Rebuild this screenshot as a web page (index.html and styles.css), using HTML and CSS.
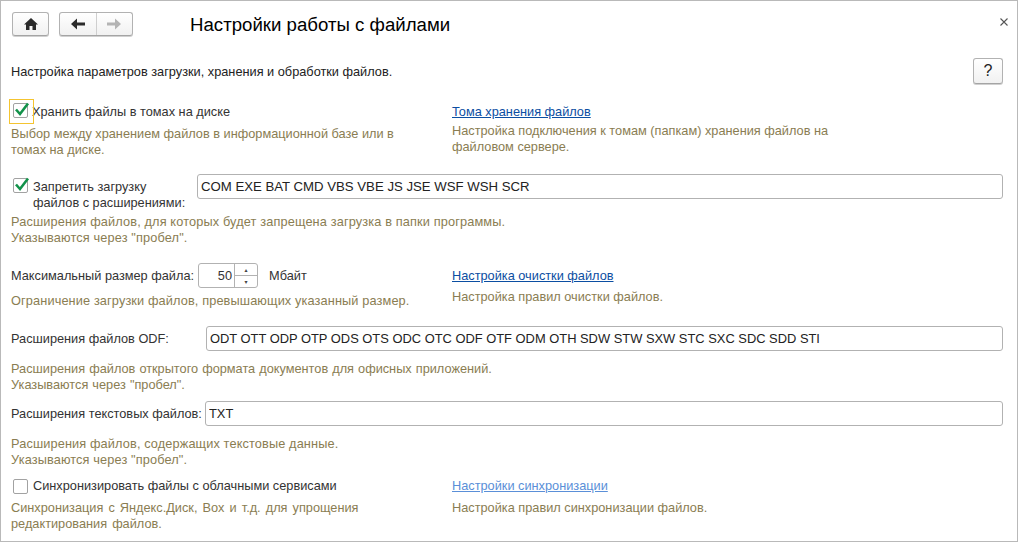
FILE: index.html
```html
<!DOCTYPE html>
<html lang="ru">
<head>
<meta charset="utf-8">
<title>Настройки работы с файлами</title>
<link rel="stylesheet" href="styles.css">
</head>
<body>
<div class="window">
  <header class="topbar">
    <button class="btn home" aria-label="Домой"><svg width="16" height="14" viewBox="0 0 16 14"><path d="M8 1 L1 7.5 L3 7.5 L3 13 L6.5 13 L6.5 9 L9.5 9 L9.5 13 L13 13 L13 7.5 L15 7.5 Z" fill="#2b2b2b"/></svg></button>
    <div class="btn nav">
      <span class="navpart"><svg width="16" height="12" viewBox="0 0 16 12"><path d="M7 0.5 L1 6 L7 11.5 L7 7.5 L15 7.5 L15 4.5 L7 4.5 Z" fill="#2b2b2b"/></svg></span>
      <span class="navpart last"><svg width="16" height="12" viewBox="0 0 16 12"><path d="M9 0.5 L15 6 L9 11.5 L9 7.5 L1 7.5 L1 4.5 L9 4.5 Z" fill="#b4b4b4"/></svg></span>
    </div>
    <h1 class="title">Настройки работы с файлами</h1>
    <svg class="close" width="8" height="8" viewBox="0 0 8 8" role="img" aria-label="Закрыть"><path d="M0.5 0.5 L7.5 7.5 M7.5 0.5 L0.5 7.5" stroke="#555" stroke-width="1.1" fill="none"/></svg>
  </header>

  <div class="intro">
    <span class="introtext">Настройка параметров загрузки, хранения и обработки файлов.</span>
    <button class="btn help">?</button>
  </div>

  <section class="cols first">
    <div class="col">
      <label class="check focused"><span class="box"><svg width="16" height="15" viewBox="0 0 16 15"><path d="M2 7.5 L6 12 L14 1.5" fill="none" stroke="#12924a" stroke-width="2.6"/></svg></span><span>Хранить файлы в томах на диске</span></label>
      <p class="desc d1">Выбор между хранением файлов в информационной базе или в томах на диске.</p>
    </div>
    <div class="col right">
      <a class="link">Тома хранения файлов</a>
      <p class="desc d1">Настройка подключения к томам (папкам) хранения файлов на файловом сервере.</p>
    </div>
  </section>

  <section class="ban">
    <label class="check wrap"><span class="box"><svg width="16" height="15" viewBox="0 0 16 15"><path d="M2 7.5 L6 12 L14 1.5" fill="none" stroke="#12924a" stroke-width="2.6"/></svg></span><span class="wraptext">Запретить загрузку<br>файлов с расширениями:</span></label>
    <input class="field" value="COM EXE BAT CMD VBS VBE JS JSE WSF WSH SCR">
  </section>
  <p class="desc b1">Расширения файлов, для которых будет запрещена загрузка в папки программы.<br>Указываются через "пробел".</p>

  <section class="cols size">
    <div class="col">
      <div class="sizerow">
        <span>Максимальный размер файла:</span>
        <div class="spin"><span class="val">50</span><span class="arrows"><i>▴</i><i>▾</i></span></div>
        <span class="unit">Мбайт</span>
      </div>
      <p class="desc d2">Ограничение загрузки файлов, превышающих указанный размер.</p>
    </div>
    <div class="col right">
      <a class="link">Настройка очистки файлов</a>
      <p class="desc d3">Настройка правил очистки файлов.</p>
    </div>
  </section>

  <section class="line odf">
    <span class="lab">Расширения файлов ODF:</span>
    <input class="field" value="ODT OTT ODP OTP ODS OTS ODC OTC ODF OTF ODM OTH SDW STW SXW STC SXC SDC SDD STI">
  </section>
  <p class="desc b2">Расширения файлов открытого формата документов для офисных приложений.<br>Указываются через "пробел".</p>

  <section class="line txt">
    <span class="lab">Расширения текстовых файлов:</span>
    <input class="field" value="TXT">
  </section>
  <p class="desc b2 b3">Расширения файлов, содержащих текстовые данные.<br>Указываются через "пробел".</p>

  <section class="cols sync">
    <div class="col">
      <label class="check"><span class="box"></span><span>Синхронизировать файлы с облачными сервисами</span></label>
      <p class="desc d4 d5">Синхронизация с Яндекс.Диск, Box и т.д. для упрощения редактирования файлов.</p>
    </div>
    <div class="col right">
      <a class="link soft">Настройки синхронизации</a>
      <p class="desc d4">Настройка правил синхронизации файлов.</p>
    </div>
  </section>
</div>
</body>
</html>
```
FILE: styles.css
```css
* { box-sizing: border-box; }
html, body { margin: 0; height: 100%; }
body { font: 12.75px/16px "Liberation Sans", Arial, sans-serif; color: #333; background: #fff; overflow: hidden; }
.window { width: 1018px; height: 542px; border: 1px solid #b9b9b9; padding: 0 14px 0 10px; overflow: hidden; }
p { margin: 0; }

.topbar { display: flex; align-items: flex-start; height: 25px; margin-top: 11px; position: relative; }
.btn { border: 1px solid #b2b2b2; border-bottom-color: #a4a4a4; border-radius: 3px; background: linear-gradient(#fff, #f1f1f1); padding: 0; box-shadow: 0 1px 0 #d0d0d0; }
.home { width: 37px; height: 24px; display: flex; align-items: center; justify-content: center; margin-left: 1px; }
.nav { width: 74px; height: 24px; display: flex; margin-left: 10px; }
.navpart { flex: 1; display: flex; align-items: center; justify-content: center; border-right: 1px solid #cfcfcf; }
.navpart.last { border-right: 0; }
.title { margin: 1px 0 0 57px; font-size: 18.65px; font-weight: 400; color: #000; line-height: 24px; }
.close { position: absolute; right: -5px; top: 6px; }

.intro { display: flex; justify-content: space-between; align-items: center; height: 26px; margin-top: 21px; color: #222; }
.introtext { padding-top: 2px; }
.help { width: 30px; height: 26px; font: 16px "Liberation Sans", Arial, sans-serif; color: #222; }

.cols { display: grid; grid-template-columns: 441px 400px; }
.first { margin-top: 20px; }
.check { display: flex; align-items: flex-start; gap: 5px; position: relative; padding-left: 2px; }
.box { width: 15px; height: 15px; border: 1px solid #a2a2a2; border-radius: 2px; background: #fff; flex: none; position: relative; }
.box svg { position: absolute; left: 0; top: -2px; }
.check.focused::before { content: ""; position: absolute; left: -2px; top: -5px; width: 23px; height: 23px; border: 1px solid #f4c430; }
.check.focused { height: 19px; gap: 4px; }
.check.focused .box { margin-top: -1px; }
.link { color: #0b4ea2; text-decoration: underline; display: block; }
.link.soft { color: #5a8fd8; }
.desc { color: #8a7d52; }
.d1 { margin-top: 3px; max-width: 390px; }
.col { min-width: 0; }

.ban { display: flex; align-items: flex-start; margin-top: 16px; }
.ban .check { width: 186px; padding-top: 4px; }
.wraptext { padding-top: 1px; }
.ban .field { width: 806px; font-size: 13.2px; }
.field { height: 25px; border: 1px solid #b2b2b2; border-radius: 3px; padding: 0 3px; font: 12.9px "Liberation Sans", Arial, sans-serif; color: #222; background: #fff; outline: 0; }
.b1 { margin-top: 3px; letter-spacing: .135px; }
.b2 { margin-top: 10px; word-spacing: .5px; }
.b3 { letter-spacing: .12px; word-spacing: 0; }

.size { margin-top: 22px; }
.sizerow { display: flex; align-items: center; height: 25px; margin-top: -5px; }
.spin { width: 60px; height: 25px; margin-left: 4px; border: 1px solid #b2b2b2; border-radius: 3px; display: flex; flex: none; }
.val { flex: 1; text-align: right; padding-right: 2px; line-height: 23px; }
.arrows { width: 23px; border-left: 1px solid #b2b2b2; display: flex; flex-direction: column; }
.arrows i { flex: 1; font: 6px/11px "DejaVu Sans", sans-serif; text-align: center; color: #444; }
.arrows i:first-child { border-bottom: 1px solid #b2b2b2; }
.unit { margin-left: 11px; }
.d2 { margin-top: 5px; letter-spacing: .12px; }
.d3 { margin-top: 5px; }

.line { display: flex; align-items: center; height: 25px; }
.odf { margin-top: 17px; }
.odf .lab { width: 195px; }
.odf .field { width: 797px; }
.txt { margin-top: 8px; }
.txt .lab { width: 194px; white-space: nowrap; }
.txt .field { width: 798px; }

.sync { margin-top: 10px; }
.sync .box { margin-top: 1px; }
.sync .check { gap: 5px; }
.d4 { margin-top: 6px; max-width: 390px; }
.d5 { word-spacing: 1.5px; }
```
